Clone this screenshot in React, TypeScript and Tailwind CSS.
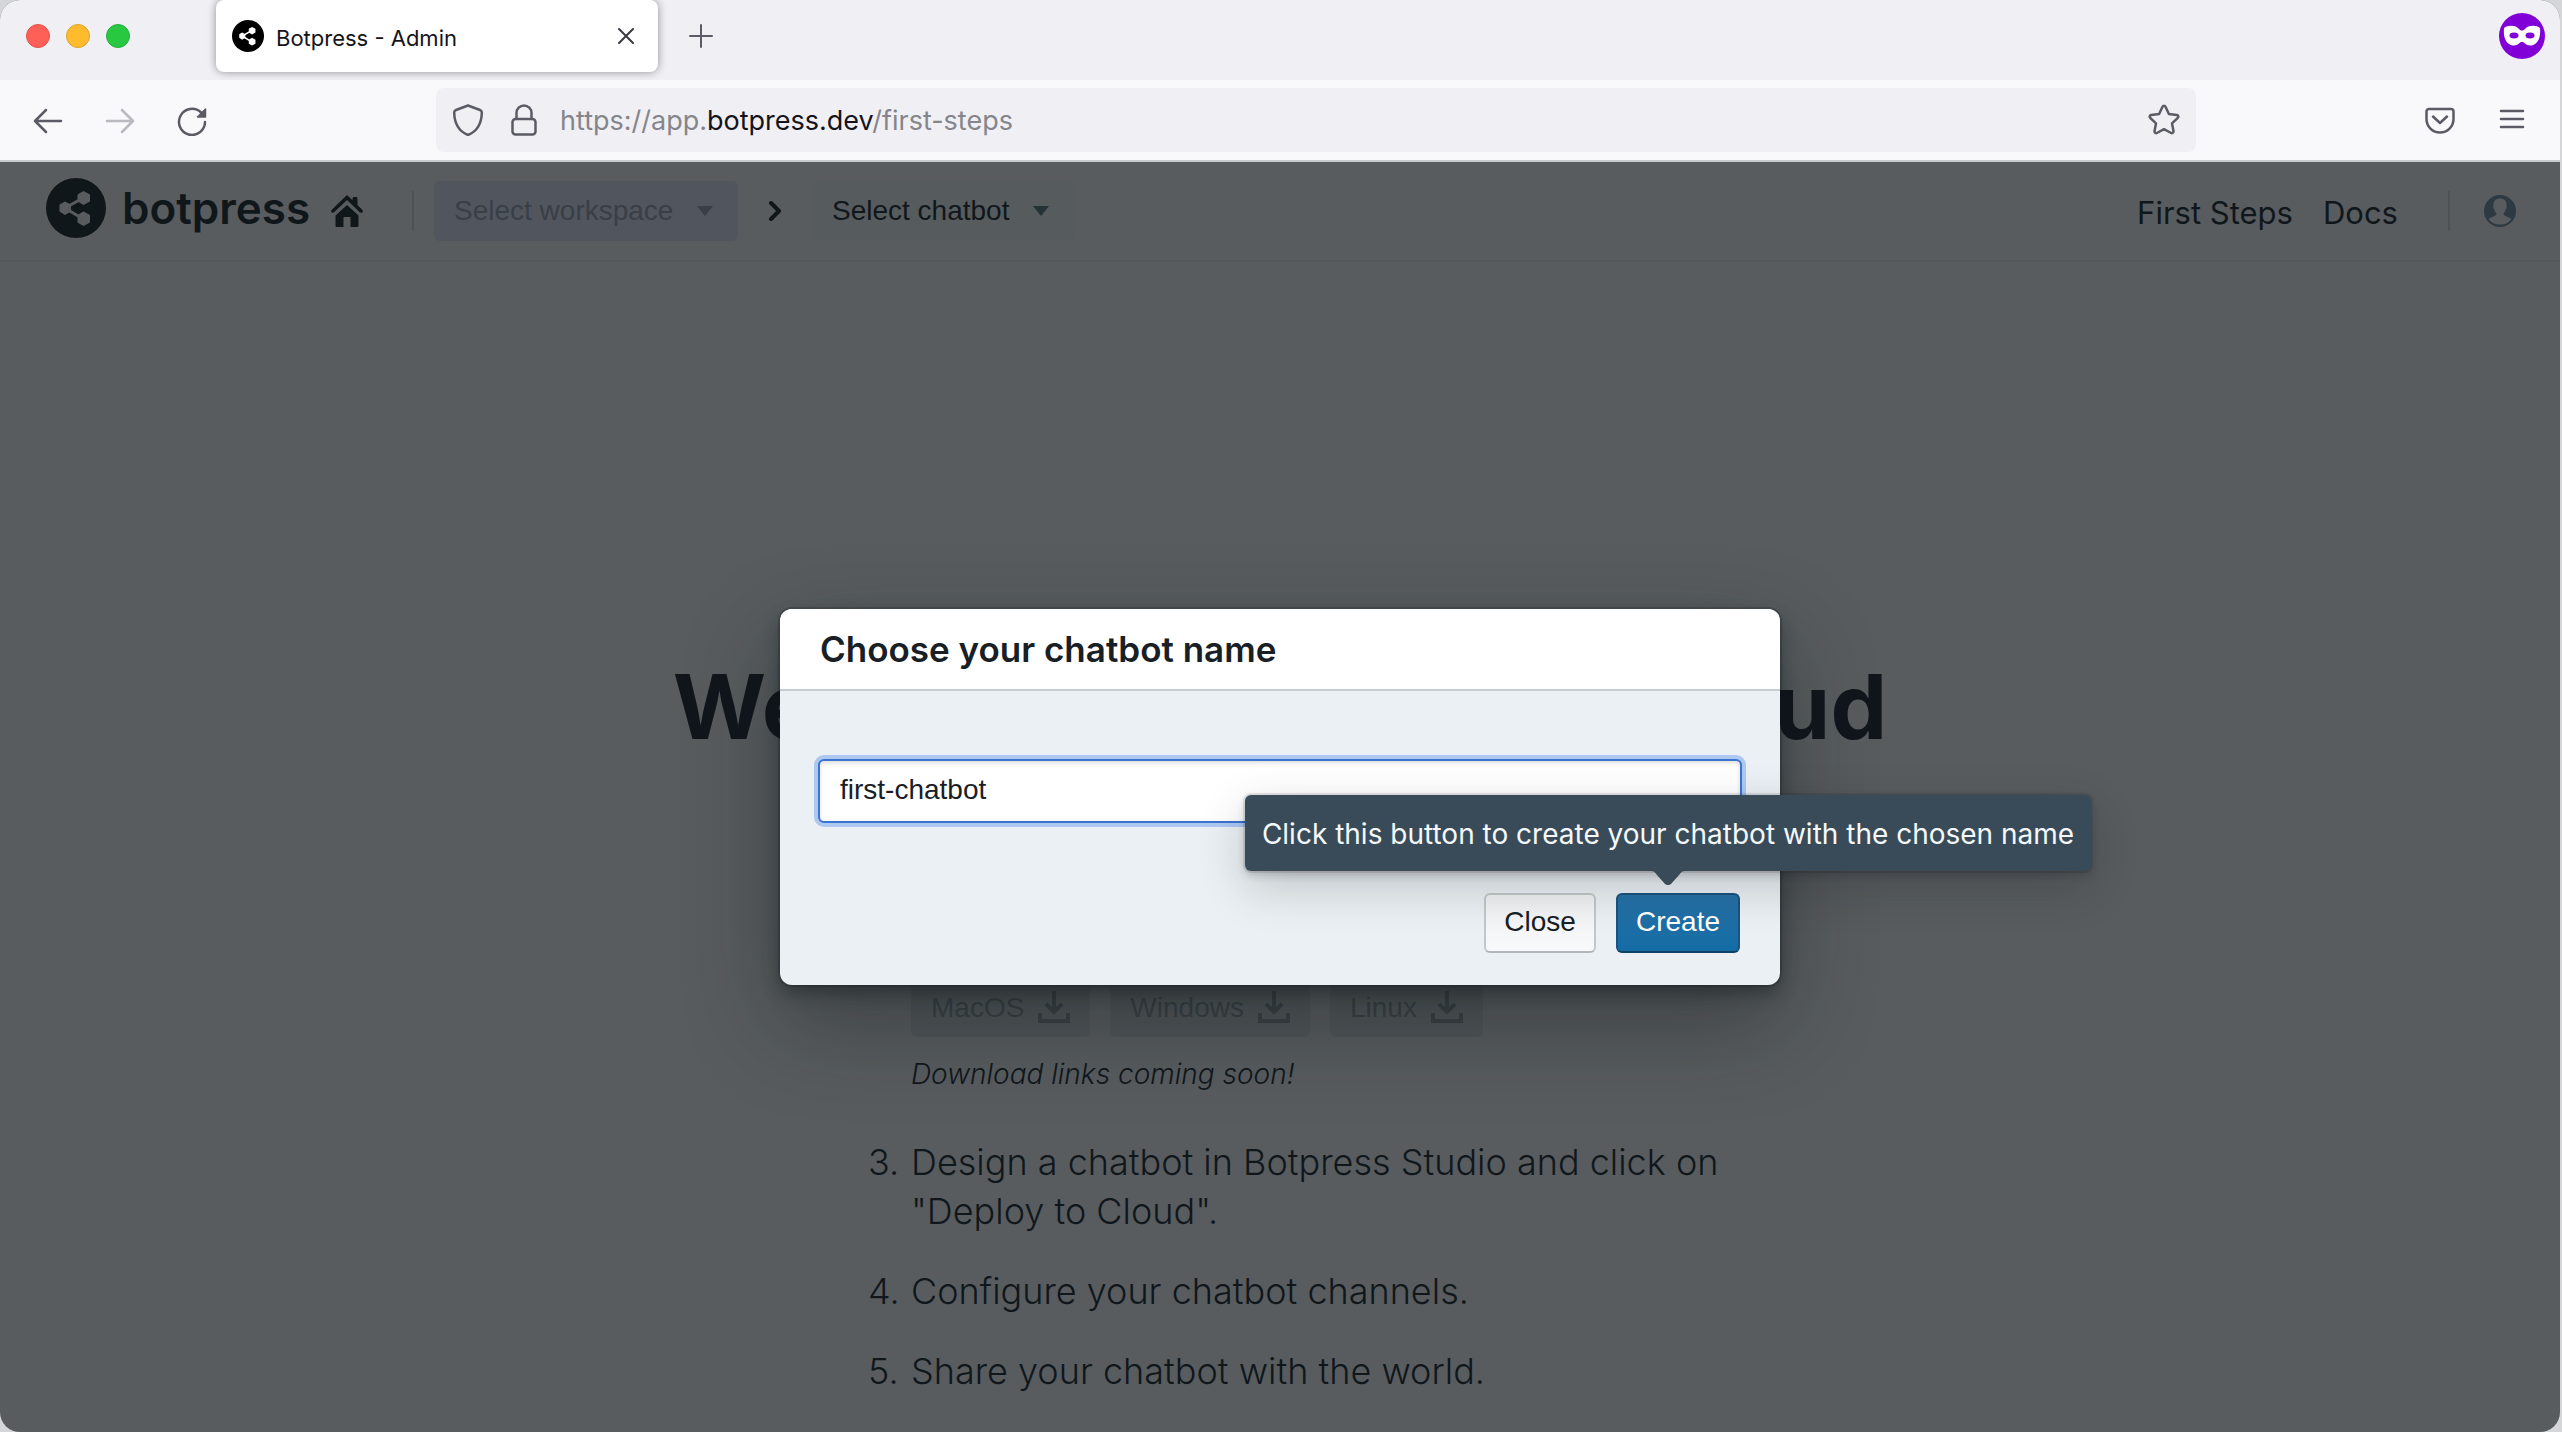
import React from "react";

function ShareMark({ className, fill, hole }: { className: string; fill: string; hole: string }) {
  return (
    <svg viewBox="0 0 60 60" className={className} aria-hidden="true">
      <circle cx="30" cy="30" r="30" fill={fill} />
      <g fill={hole}>
        <polygon points="19,23.5 25,26.5 25,33.5 19,37 13.5,33.5 13.5,26.5" />
        <polygon points="37.5,13 44,16.5 44,23.5 37.5,27 31.5,23.5 31.5,16.5" />
        <polygon points="37.5,33.5 44,37 44,44.5 37.5,48 31.5,44.5 31.5,37" />
      </g>
      <path d="M37 20 19 30 37 41" fill="none" stroke={hole} strokeWidth="3" />
    </svg>
  );
}

function TitleBar() {
  return (
    <div className="flex h-20 items-start bg-[#f0eff4] pr-[15px]">
      <div className="flex w-[216px] gap-4 pl-[26px] pt-6">
        <button aria-label="Close window" className="size-6 rounded-full border border-[#e2524c] bg-[#fe5f57]" />
        <button aria-label="Minimize window" className="size-6 rounded-full border border-[#e0a22e] bg-[#febb2e]" />
        <button aria-label="Zoom window" className="size-6 rounded-full border border-[#25b13a] bg-[#28c840]" />
      </div>
      <div className="flex h-[72px] w-[442px] items-center gap-3 rounded-lg bg-white pl-4 pr-5 shadow-[0_0_8px_rgba(0,0,0,0.4)]">
        <ShareMark className="size-8" fill="#000000" hole="#ffffff" />
        <span className="flex-1 pt-1 text-[22px] leading-7 text-[#15141a]">Botpress - Admin</span>
        <button aria-label="Close tab">
          <svg viewBox="0 0 24 24" className="size-6" fill="none" stroke="#3a3944" strokeWidth="2" strokeLinecap="round">
            <path d="M5 5l14 14M19 5 5 19" />
          </svg>
        </button>
      </div>
      <button aria-label="New tab" className="ml-[31px] pt-6">
        <svg viewBox="0 0 24 24" className="size-6" fill="none" stroke="#5b5b66" strokeWidth="2" strokeLinecap="round">
          <path d="M12 1v22M1 12h22" />
        </svg>
      </button>
      <svg viewBox="0 0 46 46" className="ml-auto mt-[13px] size-[46px]" aria-label="Private browsing">
        <circle cx="23" cy="23" r="23" fill="#8000d7" />
        <path
          d="M5 15c3-3 11-3 14 0 2 2 2.500 2.500 4 2.500s2-.5 4-2.500c3-3 11-3 14 0 .6 7-.5 13-5 16-4 2.500-8 1.500-10-.5-1-1.200-2-1.500-3-1.500s-2 .3-3 1.500c-2 2-6 3-10 .5C5.500 28 4.400 22 5 15z"
          fill="#ffffff"
        />
        <ellipse cx="15" cy="22.500" rx="4.500" ry="3" fill="#8000d7" />
        <ellipse cx="31" cy="22.500" rx="4.500" ry="3" fill="#8000d7" />
      </svg>
    </div>
  );
}

function NavBar() {
  const stroke = { fill: "none", stroke: "#5b5b66", strokeWidth: 2.5, strokeLinecap: "round", strokeLinejoin: "round" } as const;
  return (
    <div className="flex h-[82px] items-center border-b-2 border-[#c8ccd0] bg-[#f9f9fb] pl-8 pr-8">
      <div className="flex w-[404px] items-center gap-10">
        <button aria-label="Back">
          <svg viewBox="0 0 32 32" className="size-8" {...stroke}>
            <path d="M29 17H3M14 6 3 17l11 11" />
          </svg>
        </button>
        <button aria-label="Forward" className="opacity-40">
          <svg viewBox="0 0 32 32" className="size-8" {...stroke}>
            <path d="M3 17h26M18 6l11 11-11 11" />
          </svg>
        </button>
        <button aria-label="Reload">
          <svg viewBox="0 0 32 32" className="size-8" {...stroke}>
            <path d="M29 18A13 13 0 1 1 25 8.500" />
            <path d="M29.500 5v8h-8z" fill="#5b5b66" strokeWidth="1.500" />
          </svg>
        </button>
      </div>
      <div className="mr-[228px] flex h-16 flex-1 items-center gap-6 rounded-lg bg-[#f0f0f4] pl-4 pr-4">
        <svg viewBox="0 0 32 32" className="size-8" {...stroke} aria-hidden="true">
          <path d="M16 1.500 28 6c1.500.6 2 1.500 1.800 3C29.500 19 26 27 16 31 6 27 2.500 19 2.200 9 2 7.500 2.500 6.600 4 6z" />
        </svg>
        <svg viewBox="0 0 32 32" className="size-8" {...stroke} aria-hidden="true">
          <rect x="4.500" y="15" width="23" height="15.500" rx="3" />
          <path d="M8.500 15V9a7.500 7.500 0 0 1 15 0v6" />
        </svg>
        <div className="-ml-1 flex-1 pt-0.5 text-[27px] leading-8 text-[#85858c]">
          https://app.<span className="text-[#15141a]">botpress.dev</span>/first-steps
        </div>
        <button aria-label="Bookmark this page">
          <svg viewBox="0 0 32 32" className="size-8" {...stroke}>
            <path d="M14.500 2.800c.6-1.300 2.400-1.300 3 0l3.400 7.200 7.900 1c1.400.2 2 1.900 1 2.800L24 19.300l1.500 7.900c.2 1.400-1.200 2.400-2.400 1.800L16 25.200 8.900 29c-1.200.6-2.600-.4-2.400-1.800L8 19.300l-5.800-5.500c-1-.9-.4-2.600 1-2.800l7.900-1z" />
          </svg>
        </button>
      </div>
      <button aria-label="Save to Pocket">
        <svg viewBox="0 0 32 32" className="size-8" {...stroke}>
          <path d="M5 5h22a2.500 2.500 0 0 1 2.500 2.500V15a13.500 13.500 0 0 1-27 0V7.500A2.500 2.500 0 0 1 5 5z" />
          <path d="m9 12.500 7 6.500 7-6.500" />
        </svg>
      </button>
      <button aria-label="Open menu" className="ml-10">
        <svg viewBox="0 0 32 32" className="size-8" {...stroke}>
          <path d="M5 7h22M5 15h22M5 23h22" />
        </svg>
      </button>
    </div>
  );
}

function Caret({ className }: { className: string }) {
  return (
    <svg viewBox="0 0 16 10" className={className} fill="currentColor" aria-hidden="true">
      <path d="M0 0h16L8 10z" />
    </svg>
  );
}

function AppHeader() {
  return (
    <header className="flex h-[100px] items-center border-b-2 border-[#525759] pl-[46px] pr-[44px] text-[#10171b]">
      <div className="flex w-[285px] items-center gap-4 pb-1.5">
        <ShareMark className="size-[60px]" fill="#10171b" hole="#585c5f" />
        <span className="text-[44px] leading-[56px] font-semibold">botpress</span>
      </div>
      <a href="#home" aria-label="Home">
        <svg viewBox="0 0 32 32" className="size-8" fill="#10171b">
          <path d="M16 10 27.500 20.500V31a1 1 0 0 1-1 1h-7v-10h-7v10h-7a1 1 0 0 1-1-1V20.500z" />
          <path d="M16 0l5.500 5.200V3.500c0-.8.5-1.500 1.500-1.500h2c1 0 1.500.7 1.500 1.500v6.600l5 4.900c1.300 1.600-.8 3.700-2.500 2.500L16 5 2.800 17.500C1.200 18.700-.8 16.600.5 15z" />
        </svg>
      </a>
      <div className="ml-[49px] mr-5 h-10 w-0.5 bg-[#4c5255]" />
      <button disabled className="flex h-[60px] w-[304px] items-center gap-6 rounded-md bg-[#51555d] pl-5 font-[Liberation_Sans] text-[28px] text-[#393f47]">
        Select workspace
        <Caret className="h-2.5 w-4" />
      </button>
      <svg viewBox="0 0 14 20" className="ml-[30px] h-5 w-3.5" fill="none" stroke="#10171b" strokeWidth="4" strokeLinecap="round" strokeLinejoin="round" aria-hidden="true">
        <path d="M3 2l8 8-8 8" />
      </svg>
      <button className="ml-[30px] flex h-[60px] w-[262px] items-center gap-6 rounded-md bg-[#565b5d] pl-5 font-[Liberation_Sans] text-[28px]">
        Select chatbot
        <Caret className="h-2.5 w-4 text-[#243238]" />
      </button>
      <nav className="ml-auto flex items-center gap-[30px] pt-1 text-[31px]">
        <a href="#first-steps">First Steps</a>
        <a href="#docs">Docs</a>
      </nav>
      <div className="ml-[50px] mr-[34px] h-10 w-0.5 bg-[#4c5255]" />
      <button aria-label="Account">
        <svg viewBox="0 0 32 32" className="size-8">
          <circle cx="16" cy="16" r="16" fill="#2d3a43" />
          <path d="M16 3.500c4.500 0 6.800 2.500 6.500 7 .5.500.4 2-.5 3-.5 2.500-1.500 4-2.500 5 0 3 5.500 3.300 8 5.500A13.500 13.500 0 0 1 16 29.500 13.500 13.500 0 0 1 4.500 24c2.500-2.200 8-2.500 8-5.500-1-1-2-2.500-2.500-5-.9-1-1-2.500-.5-3-.3-4.500 2-7 6.500-7z" fill="#585c5f" />
        </svg>
      </button>
    </header>
  );
}

function DownloadButton({ label }: { label: string }) {
  return (
    <button disabled className="flex h-[60px] items-center gap-3.5 rounded-md bg-[#515659] px-5 font-[Liberation_Sans] text-[28px] text-[#3b4145]">
      {label}
      <svg viewBox="0 0 32 32" className="size-8" fill="none" stroke="currentColor" strokeWidth="4" aria-hidden="true">
        <path d="M2 22v8h28v-8M16 0v19M8 13l8 8 8-8" />
      </svg>
    </button>
  );
}

function Step({ number, children }: { number: number; children: React.ReactNode }) {
  return (
    <li className="flex">
      <span className="w-[43px] shrink-0">{number}.</span>
      <div>{children}</div>
    </li>
  );
}

function FirstSteps() {
  return (
    <main className="flex flex-col items-center pt-[385px] text-[#10171b]">
      <h1 className="text-[90px] leading-[120px] font-bold text-[#10161c]">Welcome to Botpress Cloud</h1>
      <ol className="mt-[161px] flex w-[904px] flex-col gap-[31px] pl-10 text-[36px] leading-[49px] font-light">
        <Step number={2}>
          <div className="mt-[49px] flex gap-5">
            <DownloadButton label="MacOS" />
            <DownloadButton label="Windows" />
            <DownloadButton label="Linux" />
          </div>
          <p className="mt-4 mb-3 text-[28px] leading-[42px] italic">Download links coming soon!</p>
        </Step>
        <Step number={3}>Design a chatbot in Botpress Studio and click on "Deploy to Cloud".</Step>
        <Step number={4}>Configure your chatbot channels.</Step>
        <Step number={5}>Share your chatbot with the world.</Step>
      </ol>
    </main>
  );
}

function CreateDialog() {
  return (
    <div className="absolute inset-0 flex items-center justify-center">
      <form
        role="dialog"
        aria-labelledby="dialog-title"
        onSubmit={(e) => e.preventDefault()}
        className="w-[1000px] rounded-xl bg-[#ebf0f4] pb-8 shadow-[0_0_0_2px_rgba(16,22,26,0.2),0_8px_16px_rgba(16,22,26,0.4),0_36px_92px_rgba(16,22,26,0.4)]"
      >
        <h2 id="dialog-title" className="rounded-t-xl border-b-2 border-[#c6ced4] bg-white px-10 text-[35px] leading-[80px] font-semibold text-[#182026]">
          Choose your chatbot name
        </h2>
        <div className="px-[38px] pt-[68px]">
          <input
            aria-label="Chatbot name"
            defaultValue="first-chatbot"
            className="h-16 w-full rounded-md border-2 border-[#3b73d0] bg-white px-5 pb-0.5 font-[Liberation_Sans] text-[28px] text-[#182026] shadow-[0_0_0_4px_#adc9f2,inset_0_2px_4px_rgba(16,22,26,0.15)] outline-none"
          />
        </div>
        <div className="mt-[70px] flex justify-end gap-5 px-10">
          <button type="button" className="h-[60px] w-[112px] rounded-md border-2 border-[#c2c7cb] border-b-[#b0b6bb] bg-linear-to-b from-[#f0f1f2] to-[#f7f9fa] pb-0.5 font-[Liberation_Sans] text-[28px] text-[#182026]">
            Close
          </button>
          <div className="relative">
            <button type="submit" aria-describedby="create-tip" className="h-[60px] w-[124px] rounded-md border-2 border-[#1a5480] border-b-[#0e4267] bg-linear-to-b from-[#2671a6] to-[#146ca5] pb-0.5 font-[Liberation_Sans] text-[28px] text-white">
              Create
            </button>
            <div
              id="create-tip"
              role="tooltip"
              className="absolute -right-[351px] bottom-[82px] flex h-[76px] w-[846px] items-center justify-center rounded-md bg-[#394b59] pt-0.5 text-[28px] whitespace-nowrap text-[#f5f8fa] shadow-[0_0_0_2px_rgba(16,22,26,0.1),0_4px_8px_rgba(16,22,26,0.2),0_16px_48px_rgba(16,22,26,0.2)]"
            >
              Click this button to create your chatbot with the chosen name
              <svg viewBox="0 0 34 14" className="absolute top-full left-1/2 h-3.5 w-[34px] -translate-x-1/2" fill="#394b59" aria-hidden="true">
                <path d="M0 0h34c-3 0-4 1.500-6 4l-8 9c-2 1.500-4 1.500-6 0L6 4C4 1.500 3 0 0 0z" />
              </svg>
            </div>
          </div>
        </div>
      </form>
    </div>
  );
}

export default function App() {
  return (
    <div className="flex min-h-screen flex-col bg-[#d4d6d7] pr-0.5 font-[Inter,sans-serif]">
      <div className="flex flex-1 flex-col overflow-hidden rounded-[20px] bg-[#585c5f]">
        <TitleBar />
        <NavBar />
        <div className="relative flex-1">
          <AppHeader />
          <FirstSteps />
          <CreateDialog />
        </div>
      </div>
    </div>
  );
}
